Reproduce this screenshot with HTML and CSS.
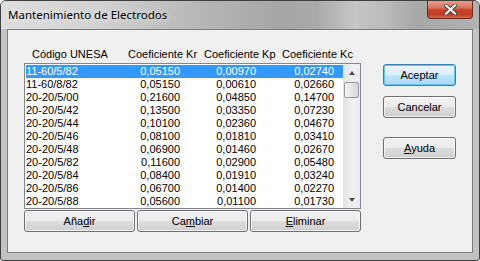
FILE: index.html
```html
<!DOCTYPE html>
<html lang="es">
<head>
  <meta charset="UTF-8" />
  <title>Mantenimiento de Electrodos</title>
  <link rel="stylesheet" href="styles.css">
</head>
<body>
  <div class="window">
    <div class="titlebar">
      <span class="title">Mantenimiento de Electrodos</span>
      <div class="close">
        <svg width="13" height="11" viewBox="0 0 13 11">
          <path d="M2 1.5 L11 9.5 M11 1.5 L2 9.5" stroke="#4a4a4a" stroke-width="4" stroke-linecap="square"/>
          <path d="M2 1.5 L11 9.5 M11 1.5 L2 9.5" stroke="#ffffff" stroke-width="2" stroke-linecap="square"/>
        </svg>
      </div>
    </div>

    <div class="client">
      <div class="left">
        <div class="header">
          <span>Código UNESA</span>
          <span>Coeficiente Kr</span>
          <span>Coeficiente Kp</span>
          <span>Coeficiente Kc</span>
        </div>
        <div class="listbox">
          <div class="rows">
            <div class="row selected"><span>11-60/5/82</span><span>0,05150</span><span>0,00970</span><span>0,02740</span></div>
            <div class="row"><span>11-60/8/82</span><span>0,05150</span><span>0,00610</span><span>0,02660</span></div>
            <div class="row"><span>20-20/5/00</span><span>0,21600</span><span>0,04850</span><span>0,14700</span></div>
            <div class="row"><span>20-20/5/42</span><span>0,13500</span><span>0,03350</span><span>0,07230</span></div>
            <div class="row"><span>20-20/5/44</span><span>0,10100</span><span>0,02360</span><span>0,04670</span></div>
            <div class="row"><span>20-20/5/46</span><span>0,08100</span><span>0,01810</span><span>0,03410</span></div>
            <div class="row"><span>20-20/5/48</span><span>0,06900</span><span>0,01460</span><span>0,02670</span></div>
            <div class="row"><span>20-20/5/82</span><span>0,11600</span><span>0,02900</span><span>0,05480</span></div>
            <div class="row"><span>20-20/5/84</span><span>0,08400</span><span>0,01910</span><span>0,03240</span></div>
            <div class="row"><span>20-20/5/86</span><span>0,06700</span><span>0,01400</span><span>0,02270</span></div>
            <div class="row"><span>20-20/5/88</span><span>0,05600</span><span>0,01100</span><span>0,01730</span></div>
          </div>
          <div class="scrollbar">
            <div class="arrow up"></div>
            <div class="thumb"></div>
            <div class="track"></div>
            <div class="arrow down"></div>
          </div>
        </div>
        <div class="actions">
          <button class="btn">Aña<u>d</u>ir</button>
          <button class="btn">Ca<u>m</u>biar</button>
          <button class="btn"><u>E</u>liminar</button>
        </div>
      </div>

      <div class="right">
        <button class="btn default">Aceptar</button>
        <button class="btn">Cancelar</button>
        <button class="btn help"><u>A</u>yuda</button>
      </div>
    </div>
  </div>
</body>
</html>
```

FILE: styles.css
```css
body {
  margin: 0;
  background: #ffffff;
  font-family: "Liberation Sans", Arial, sans-serif;
  font-size: 11px;
}
.window {
  width: 480px;
  height: 261px;
  box-sizing: border-box;
  border: 1px solid #3f3f3f;
  border-radius: 6px 6px 3px 3px;
  background: linear-gradient(to bottom, #c4c4c4, #c2c2c2);
  display: flex;
  flex-direction: column;
  overflow: hidden;
}
.titlebar {
  height: 28px;
  display: flex;
  align-items: flex-start;
  background: linear-gradient(to right, #dedede 0%, #d2d2d2 20%, #b6b6b6 42%, #a6a6a6 58%, #a9a9a9 66%, #c6c6c6 74%, #bcbcbc 80%, #a7a7a7 87%, #b2b2b2 100%);
}
.title {
  font-family: "Noto Sans", "DejaVu Sans", sans-serif;
  font-size: 11.5px;
  line-height: 16px;
  color: #000000;
  padding: 6px 0 0 7px;
  text-shadow: 0 0 6px rgba(255,255,255,0.9);
}
.close {
  margin-left: auto;
  margin-right: 6px;
  margin-top: -1px;
  width: 46px;
  height: 19px;
  box-sizing: border-box;
  border: 1px solid #6b2b20;
  border-top: none;
  border-radius: 0 0 4px 4px;
  background: linear-gradient(to bottom, #e9a493 0%, #da7a62 40%, #c8452b 55%, #c13a22 80%, #d86a4e 100%);
  display: flex;
  align-items: center;
  justify-content: center;
}
.client {
  flex: 1;
  margin: 0 6px 7px 6px;
  border: 1px solid #7c7c7c;
  background: #f0f0f0;
  display: flex;
  padding: 18px 0 0 16px;
}
.left {
  width: 337px;
  display: flex;
  flex-direction: column;
}
.header {
  display: grid;
  grid-template-columns: 96px 76px 78px 1fr;
  padding-left: 8px;
  height: 13px;
  line-height: 13px;
  white-space: nowrap;
}
.listbox {
  margin-top: 2px;
  height: 146px;
  box-sizing: border-box;
  border: 1px solid #828790;
  background: #ffffff;
  display: flex;
  padding-left: 1px;
}
.rows {
  width: 317px;
  padding-top: 1px;
  overflow: hidden;
}
.row {
  display: grid;
  grid-template-columns: 114px 40px 76px 78px;
  height: 13px;
  line-height: 13px;
  color: #000000;
}
.row span:not(:first-child) {
  text-align: right;
}
.row.selected {
  background: #3399ff;
  color: #ffffff;
}
.scrollbar {
  width: 17px;
  margin-left: auto;
  display: flex;
  flex-direction: column;
  background: linear-gradient(to right, #e3e3e3, #f2f2f2 60%, #ececec);
}
.arrow {
  height: 17px;
  display: flex;
  align-items: center;
  justify-content: center;
}
.arrow::after {
  content: "";
  width: 0;
  height: 0;
  border-left: 3.5px solid transparent;
  border-right: 3.5px solid transparent;
}
.arrow.up::after {
  border-bottom: 4px solid #4d4d4d;
}
.arrow.down::after {
  border-top: 4px solid #4d4d4d;
}
.thumb {
  height: 16px;
  margin: 1px 1px 0 1px;
  box-sizing: border-box;
  border: 1px solid #9a9a9a;
  border-radius: 2px;
  background: linear-gradient(to right, #f4f4f4, #e6e6e6 50%, #d6d6d6);
}
.track {
  flex: 1;
}
.actions {
  margin-top: 1px;
  display: flex;
  gap: 2px;
}
.btn {
  font-family: "Liberation Sans", Arial, sans-serif;
  font-size: 11px;
  color: #000000;
  height: 22px;
  padding: 0;
  box-sizing: border-box;
  border: 1px solid #707070;
  border-radius: 3px;
  background: linear-gradient(to bottom, #f2f2f2 0%, #ebebeb 50%, #dddddd 51%, #cfcfcf 100%);
  box-shadow: inset 0 0 0 1px rgba(255,255,255,0.7);
}
.actions .btn {
  width: 111px;
}
.right {
  margin-left: 22px;
  margin-top: 16px;
  display: flex;
  flex-direction: column;
  gap: 10px;
}
.right .btn {
  width: 73px;
}
.btn.default {
  border-color: #3c7fb1;
  background: linear-gradient(to bottom, #eaf6fd 0%, #d9f0fc 50%, #bee6fd 51%, #a7d9f5 100%);
  box-shadow: inset 0 0 0 1px #62c6f2;
}
.btn.help {
  margin-top: 9px;
}
```
